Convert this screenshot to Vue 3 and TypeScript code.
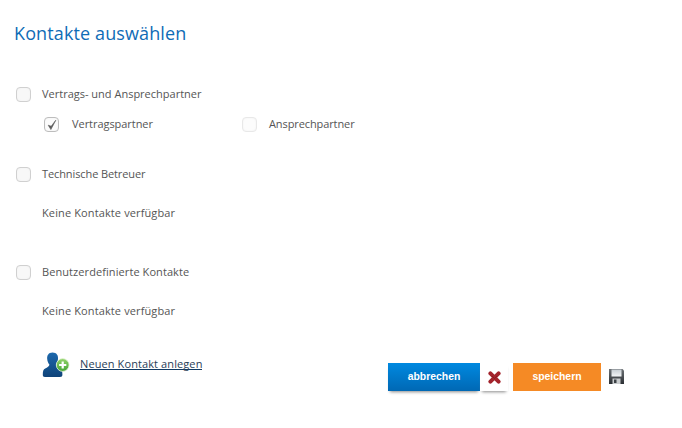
<script setup lang="ts">
interface Group { label: string; empty: boolean }
const groups: Group[] = [
  { label: 'Technische Betreuer', empty: true },
  { label: 'Benutzerdefinierte Kontakte', empty: true },
]
</script>

<template>
  <div class="page">
    <h1 class="title">Kontakte auswählen</h1>

    <section class="first">
      <label class="row">
        <span class="box"></span>
        <span class="label">Vertrags- und Ansprechpartner</span>
      </label>
      <div class="subrow">
        <label class="sub sub-a">
          <span class="box small checked">
            <svg width="12" height="12" viewBox="0 0 12 12"><path d="M2.2 6.2 L4.9 10.6 L9.8 1.2 L5.2 7.2 Z" fill="#5a5a5a" stroke="#5a5a5a" stroke-width=".6"/></svg>
          </span>
          <span class="label">Vertragspartner</span>
        </label>
        <label class="sub sub-b">
          <span class="box small faint"></span>
          <span class="label">Ansprechpartner</span>
        </label>
      </div>
    </section>

    <section v-for="g in groups" :key="g.label" class="group">
      <label class="row">
        <span class="box"></span>
        <span class="label">{{ g.label }}</span>
      </label>
      <p class="none">Keine Kontakte verfügbar</p>
    </section>

    <div class="footer">
      <a class="add">
        <svg class="person" width="28" height="26" viewBox="0 0 28 26">
          <defs>
            <linearGradient id="pg" x1="0" y1="0" x2="0" y2="1"><stop offset="0" stop-color="#1d69ad"/><stop offset="1" stop-color="#0f4379"/></linearGradient>
            <linearGradient id="gg" x1="0" y1="0" x2="0" y2="1"><stop offset="0" stop-color="#93d46a"/><stop offset="1" stop-color="#45a535"/></linearGradient>
          </defs>
          <path d="M10.5 0.5 C14.6 0.5 16.4 3.4 16 7 C15.8 9.4 14.9 11 14.1 12.4 C14 13.6 15.4 14.4 17.6 15.4 C19.6 16.4 20.4 18.5 20.4 22.5 C20.4 24.3 19.6 25 18 25 L3 25 C1.4 25 0.8 24.3 0.8 22.5 C0.8 19 1.4 17.6 3.2 16.6 C5.2 15.5 7.4 14.6 7.4 12.6 C6.2 11 5.4 9.4 5.2 7 C4.9 3.4 6.6 0.5 10.5 0.5 Z" fill="url(#pg)"/>
          <circle cx="20.7" cy="13" r="6.4" fill="url(#gg)" stroke="#eaf5e0" stroke-width=".8"/>
          <path d="M20.7 9.4 V16.6 M17.1 13 H24.3" stroke="#fff" stroke-width="2.2"/>
        </svg>
        <span class="add-text">Neuen Kontakt anlegen</span>
      </a>
      <div class="actions">
        <button class="btn blue">abbrechen</button>
        <span class="cancel">
          <svg width="13" height="13" viewBox="0 0 13 13"><path d="M2.4 2.4 L10.6 10.6 M10.6 2.4 L2.4 10.6" fill="none" stroke="#a3232b" stroke-width="4" stroke-linecap="round"/><path d="M4 5 L6.5 7.5 M9 5 L6.5 7.5" fill="none" stroke="#8a1a22" stroke-width="1"/></svg>
        </span>
        <button class="btn orange">speichern</button>
        <svg class="save" width="17" height="17" viewBox="0 0 17 17">
          <defs>
            <linearGradient id="sg" x1="0" y1="0" x2="0" y2="1"><stop offset="0" stop-color="#6d7276"/><stop offset="1" stop-color="#2b2f33"/></linearGradient>
            <linearGradient id="sl" x1="0" y1="0" x2="0" y2="1"><stop offset="0" stop-color="#c5ccd1"/><stop offset="1" stop-color="#f4f6f7"/></linearGradient>
          </defs>
          <path d="M1 1 H14.5 L16 2.5 V16 H1 Z" fill="url(#sg)"/>
          <rect x="3.5" y="1.5" width="10" height="7" fill="url(#sl)"/>
          <rect x="4.5" y="10.5" width="8" height="5.5" fill="#c9ccce"/>
          <rect x="6" y="11.5" width="2.5" height="3.5" fill="#3c4145"/>
        </svg>
      </div>
    </div>
  </div>
</template>

<style scoped>
.page {
  width: 682px;
  height: 428px;
  box-sizing: border-box;
  padding: 21px 14px 0 16px;
  font-family: "Open Sans", "Noto Sans", sans-serif;
  font-size: 11px;
  color: #555;
  background: #fff;
  overflow: hidden;
}
.title {
  margin: 0 0 0 -2px;
  font-size: 18px;
  line-height: 24px;
  font-weight: 400;
  color: #0f6cb6;
  letter-spacing: .12px;
}
.first { margin-top: 40px; }
.row { display: flex; align-items: center; height: 18px; }
.box {
  display: block;
  flex: none;
  width: 13px;
  height: 13px;
  margin-top: 1px;
  border: 1px solid #d0d0d0;
  border-radius: 4px;
  background: #f8f8f8;
  box-shadow: inset 0 0 2px #eee;
}
.label { position: relative; top: -1px; }
.row .label { margin-left: 11px; }
.subrow { display: flex; margin: 12px 0 0 28px; height: 18px; }
.sub { display: flex; align-items: center; }
.sub-a { width: 198px; }
.sub-a .label { margin-left: 13px; letter-spacing: -.05px; }
.sub-b .label { margin-left: 12px; letter-spacing: -.1px; }
.small { display: flex; align-items: center; justify-content: center; }
.checked { border-color: #bdbdbd; background: #fbfbfb; }
.faint { border-color: #e8e8e8; background: #fcfcfc; }
.group { margin-top: 32px; }
.group .label { letter-spacing: -.1px; }
.group + .group { margin-top: 41px; }
.group + .group .label { letter-spacing: .08px; }
.none { margin: 21px 0 0 26px; line-height: 18px; letter-spacing: .12px; }
.footer { display: flex; margin-top: 32px; }
.add { display: flex; align-items: flex-start; margin-left: 26px; width: 346px; }
.person { flex: none; }
.add-text {
  margin: 5px 0 0 10px;
  color: #2a4058;
  line-height: 14px;
  letter-spacing: .1px;
  border-bottom: 1px solid #123a63;
  height: 12px;
}
.actions { display: flex; align-items: flex-start; margin-top: 11px; }
.btn {
  border: 0;
  padding: 0 0 2px;
  height: 28px;
  font-family: "Liberation Sans", Arial, sans-serif;
  font-size: 10.4px;
  font-weight: 700;
  color: #fff;
}
.blue { width: 92px; background: linear-gradient(#0089e0, #0068b4); box-shadow: 0 3px 3px -2px #8a8a8a; }
.orange { width: 88px; background: #f58a25; }
.cancel {
  width: 28px;
  height: 28px;
  margin-right: 5px;
  box-sizing: border-box;
  padding-left: 8px;
  display: flex;
  align-items: center;
  box-shadow: 0 3px 3px -2px #8a8a8a;
  background: #fff;
}
.save { margin: 5px 0 0 7px; }
</style>
